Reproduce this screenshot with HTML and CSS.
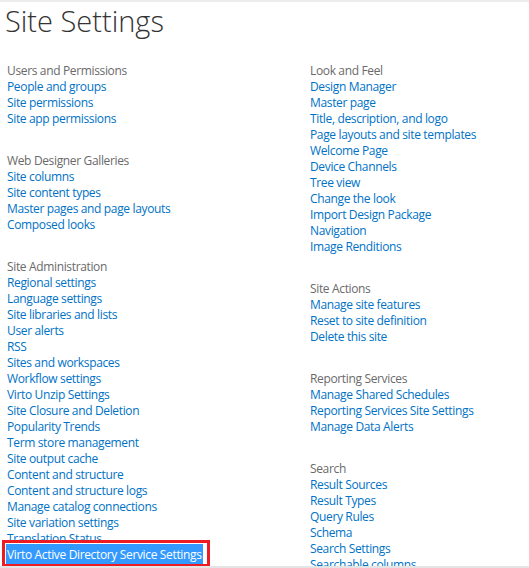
FILE: index.html
```html
<!DOCTYPE html>
<html lang="en">
<head>
	<meta charset="UTF-8">
	<meta name="viewport" content="width=device-width, initial-scale=1.0">
	<title>Site Settings</title>
	<link rel="stylesheet" href="styles.css">
</head>
<body>
	<div class="page">
		<h1 class="page-title">Site Settings</h1>

		<div class="columns">
			<!-- Columna izquierda -->
			<div class="column">
				<div class="section">
					<h3>Users and Permissions</h3>
					<ul>
						<li><a href="#">People and groups</a></li>
						<li><a href="#">Site permissions</a></li>
						<li><a href="#">Site app permissions</a></li>
					</ul>
				</div>
				<div class="section">
					<h3>Web Designer Galleries</h3>
					<ul>
						<li><a href="#">Site columns</a></li>
						<li><a href="#">Site content types</a></li>
						<li><a href="#">Master pages and page layouts</a></li>
						<li><a href="#">Composed looks</a></li>
					</ul>
				</div>
				<div class="section">
					<h3>Site Administration</h3>
					<ul>
						<li><a href="#">Regional settings</a></li>
						<li><a href="#">Language settings</a></li>
						<li><a href="#">Site libraries and lists</a></li>
						<li><a href="#">User alerts</a></li>
						<li><a href="#">RSS</a></li>
						<li><a href="#">Sites and workspaces</a></li>
						<li><a href="#">Workflow settings</a></li>
						<li><a href="#">Virto Unzip Settings</a></li>
						<li><a href="#">Site Closure and Deletion</a></li>
						<li><a href="#">Popularity Trends</a></li>
						<li><a href="#">Term store management</a></li>
						<li><a href="#">Site output cache</a></li>
						<li><a href="#">Content and structure</a></li>
						<li><a href="#">Content and structure logs</a></li>
						<li><a href="#">Manage catalog connections</a></li>
						<li><a href="#">Site variation settings</a></li>
						<li><a href="#">Translation Status</a></li>
						<li class="flagged"><a class="selected" href="#">Virto Active Directory Service Settings</a></li>
					</ul>
				</div>
			</div>

			<!-- Columna derecha -->
			<div class="column">
				<div class="section">
					<h3>Look and Feel</h3>
					<ul>
						<li><a href="#">Design Manager</a></li>
						<li><a href="#">Master page</a></li>
						<li><a href="#">Title, description, and logo</a></li>
						<li><a href="#">Page layouts and site templates</a></li>
						<li><a href="#">Welcome Page</a></li>
						<li><a href="#">Device Channels</a></li>
						<li><a href="#">Tree view</a></li>
						<li><a href="#">Change the look</a></li>
						<li><a href="#">Import Design Package</a></li>
						<li><a href="#">Navigation</a></li>
						<li><a href="#">Image Renditions</a></li>
					</ul>
				</div>
				<div class="section">
					<h3>Site Actions</h3>
					<ul>
						<li><a href="#">Manage site features</a></li>
						<li><a href="#">Reset to site definition</a></li>
						<li><a href="#">Delete this site</a></li>
					</ul>
				</div>
				<div class="section">
					<h3>Reporting Services</h3>
					<ul>
						<li><a href="#">Manage Shared Schedules</a></li>
						<li><a href="#">Reporting Services Site Settings</a></li>
						<li><a href="#">Manage Data Alerts</a></li>
					</ul>
				</div>
				<div class="section">
					<h3>Search</h3>
					<ul>
						<li><a href="#">Result Sources</a></li>
						<li><a href="#">Result Types</a></li>
						<li><a href="#">Query Rules</a></li>
						<li><a href="#">Schema</a></li>
						<li><a href="#">Search Settings</a></li>
						<li><a href="#">Searchable columns</a></li>
					</ul>
				</div>
			</div>
		</div>
	</div>
</body>
</html>
```

FILE: styles.css
```css
body {
	font-family: "Open Sans", "Noto Sans", Arial, sans-serif;
	font-size: 12px;
	letter-spacing: -0.35px;
	margin: 0;
	padding: 0;
	background-color: white;
}
.page {
	height: 564px;
	overflow: hidden;
	border-top: 2px solid #ededed;
	border-bottom: 2px solid #e4e4e4;
	padding: 0 7px;
}
.page-title {
	font-size: 29px;
	font-weight: 300;
	letter-spacing: 0;
	color: #333;
	line-height: 38px;
	margin: 0 0 23px -2px;
}
.columns {
	display: grid;
	grid-template-columns: 303px 1fr;
}
.section {
	margin-bottom: 26px;
}
.section h3 {
	font-size: 12px;
	font-weight: normal;
	color: #6a6a6a;
	line-height: 16px;
	margin: 0;
}
.section ul {
	list-style: none;
	margin: 0;
	padding: 0;
}
.section li {
	line-height: 16px;
}
.section a {
	color: #0072c6;
	text-decoration: none;
}
.flagged {
	position: relative;
}
.flagged::after {
	content: "";
	position: absolute;
	left: -5px;
	top: -7px;
	width: 202px;
	height: 21px;
	border: 3px solid #ed1c24;
}
.selected {
	background-color: #3399ff;
	color: white !important;
	padding: 2px 1px;
	margin-left: -1px;
}
```
